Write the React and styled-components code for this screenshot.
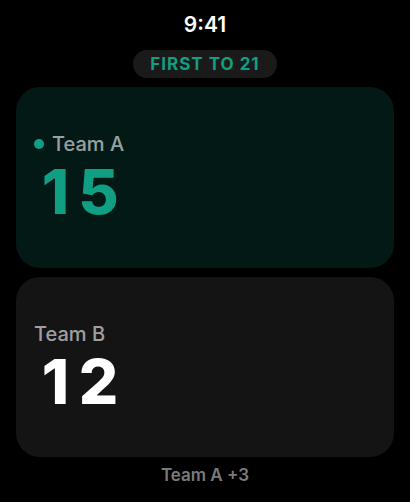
import React from "react";
import styled, { createGlobalStyle } from "styled-components";

const TARGET = 21;

const teams = [
  { name: "Team A", score: 15 },
  { name: "Team B", score: 12 },
];

const App = () => {
  const [a, b] = teams;
  const leader = a.score >= b.score ? a : b;
  const lead = Math.abs(a.score - b.score);

  return (
    <>
      <GlobalStyle />
      <Screen>
        <Clock>9:41</Clock>
        <TargetPill>FIRST TO {TARGET}</TargetPill>
        <Scoreboard>
          {teams.map((team) => (
            <TeamCard key={team.name} $leading={team === leader}>
              <TeamName>
                {team === leader && <LeadDot />}
                {team.name}
              </TeamName>
              <Score $leading={team === leader}>
                {String(team.score)
                  .split("")
                  .map((digit, i) => (
                    <Digit key={i}>{digit}</Digit>
                  ))}
              </Score>
            </TeamCard>
          ))}
        </Scoreboard>
        <Lead>{`${leader.name} +${lead}`}</Lead>
      </Screen>
    </>
  );
};

const GlobalStyle = createGlobalStyle`
  * {
    box-sizing: border-box;
  }

  body {
    margin: 0;
    background: #000000;
    font-family: Inter, sans-serif;
  }
`;

const Screen = styled.main`
  min-height: 100vh;
  padding: 10px 16px 15px;
  display: flex;
  flex-direction: column;
  align-items: center;
`;

const Clock = styled.time`
  font-size: 21px;
  line-height: 30px;
  font-weight: 600;
  color: #ffffff;
`;

const TargetPill = styled.div`
  margin: 10px 0 9px;
  padding: 0 17px;
  border-radius: 14px;
  background: #1a1a1a;
  font-size: 17px;
  line-height: 28px;
  font-weight: 700;
  letter-spacing: 1px;
  color: #109f83;
`;

const Scoreboard = styled.div`
  flex: 1;
  align-self: stretch;
  display: flex;
  flex-direction: column;
  gap: 9px;
`;

const TeamCard = styled.button`
  flex: 1;
  padding: 6px 18px 0;
  display: flex;
  flex-direction: column;
  justify-content: center;
  align-items: flex-start;
  border: none;
  border-radius: 24px;
  background: ${(props) => (props.$leading ? "#031916" : "#141414")};
  font-family: inherit;
  cursor: pointer;
`;

const TeamName = styled.span`
  display: flex;
  align-items: center;
  gap: 8px;
  font-size: 20px;
  line-height: 24px;
  font-weight: 500;
  color: rgba(255, 255, 255, 0.6);
`;

const LeadDot = styled.span`
  width: 10px;
  height: 10px;
  border-radius: 50%;
  background: #109f83;
`;

const Score = styled.span`
  display: flex;
  font-size: 62px;
  line-height: 72px;
  font-weight: 800;
  color: ${(props) => (props.$leading ? "#109f83" : "#ffffff")};
`;

const Digit = styled.span`
  width: 43px;
  text-align: center;
`;

const Lead = styled.footer`
  margin-top: 6px;
  font-size: 17px;
  line-height: 24px;
  font-weight: 600;
  color: #7a7a7a;
`;

export default App;
